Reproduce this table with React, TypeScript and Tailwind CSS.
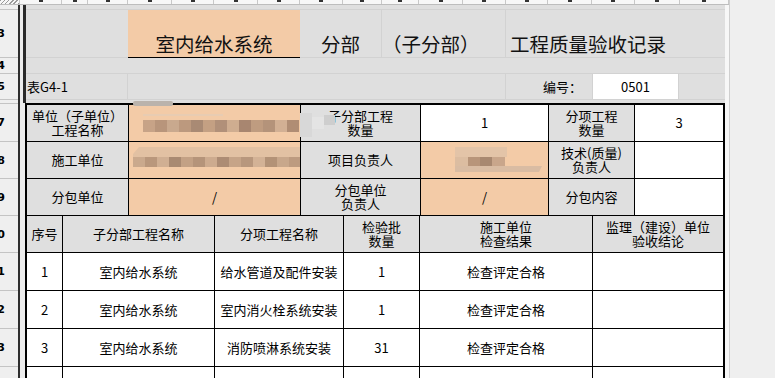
const topCols = [
  "w-[42px]", "w-[26px]", "w-[40px]", "w-[44px]", "w-[42px]", "w-[44px]", "w-[42px]", "w-[43px]", "w-[39px]",
  "w-[37px]", "w-[44px]", "w-[43px]", "w-[42px]", "w-[44px]", "w-[43px]", "w-[45px]", "w-[49px]",
];

const rowHeads = [
  { h: "h-[5px]", l: "" },
  { h: "h-[48px]", l: "3" },
  { h: "h-[16px]", l: "4" },
  { h: "h-[26px]", l: "5" },
  { h: "h-[4px]", l: "" },
  { h: "h-[38px]", l: "7" },
  { h: "h-[37px]", l: "8" },
  { h: "h-[37px]", l: "9" },
  { h: "h-[37px]", l: "10" },
  { h: "h-[38px]", l: "11" },
  { h: "h-[38px]", l: "12" },
  { h: "h-[38px]", l: "13" },
  { h: "h-[38px]", l: "14" },
];

const rows = [
  { no: "1", sub: "室内给水系统", item: "给水管道及配件安装", qty: "1", result: "检查评定合格" },
  { no: "2", sub: "室内给水系统", item: "室内消火栓系统安装", qty: "1", result: "检查评定合格" },
  { no: "3", sub: "室内给水系统", item: "消防喷淋系统安装", qty: "31", result: "检查评定合格" },
  { no: "", sub: "", item: "", qty: "", result: "" },
];

const mos1 = ["#c7a387", "#b8957b", "#c9a98e", "#bc997e", "#a98a74", "#c4a083", "#b19079", "#cfad90", "#a88670", "#bf9c80", "#b4937a", "#d2b094", "#b08d74"];
const mos2 = ["#caa98d", "#b9977c", "#d0af93", "#a98a72", "#c3a185", "#b5947a", "#cdab8f", "#ad8c74", "#c6a488", "#b8977d", "#d3b296", "#b39277", "#c8a78b", "#bd9b80"];

// pixelated (blurred) fields drawn over the cells
function Blur1() {
  return (
    <svg className="absolute left-0 top-[-4px] h-[36px] w-[210px] overflow-visible" viewBox="0 0 210 36">
      <rect x="4" y="0" width="40" height="5" rx="2" fill="#bab3ac" />
      <rect x="14" y="13" width="80" height="2" fill="#e8ccb2" />
      {mos1.map((c, i) => (
        <rect key={i} x={14 + i * 12} y="19" width="12" height="12" fill={c} />
      ))}
      <rect x="171" y="12" width="12" height="24" fill="#d8d8d8" />
      <rect x="183" y="16" width="12" height="12" fill="#e4e4e4" />
      <rect x="195" y="14" width="11" height="10" fill="#cecece" />
    </svg>
  );
}

function Blur2() {
  return (
    <svg className="absolute left-0 top-0 h-[30px] w-[171px]" viewBox="0 0 171 30">
      <polygon points="4,12 10,5 171,5 171,15 4,15" fill="#e2c1a3" />
      {mos2.map((c, i) => (
        <rect key={i} x={4 + i * 12} y="15" width="12" height="10" fill={c} />
      ))}
    </svg>
  );
}

function Blur3() {
  return (
    <svg className="absolute left-0 top-0 h-[32px] w-[126px]" viewBox="0 0 126 32">
      <rect x="34" y="5" width="52" height="10" fill="#e3c4a8" />
      <rect x="34" y="15" width="13" height="10" fill="#dcbda1" />
      <rect x="47" y="15" width="12" height="10" fill="#b8957a" />
      <rect x="59" y="15" width="12" height="10" fill="#a88870" />
      <rect x="71" y="15" width="13" height="10" fill="#c9a68b" />
      <polygon points="34,24 121,24 118,30 34,30" fill="#d9bca3" />
    </svg>
  );
}

export default function App() {
  return (
    <div className="flex h-[378px] w-[775px] overflow-hidden bg-[#efefef] font-['Noto_Sans_CJK_SC',sans-serif] text-[13px] text-black">
      <div className="flex w-[729px] shrink-0 flex-col">
        {/* column header strip */}
        <div className="flex h-[5px] shrink-0 border-b border-[#bdbdbd] bg-[#f7f7f7]">
          <div className="w-[20px] border-r border-[#c8c8c8] bg-[repeating-linear-gradient(135deg,#9a9a9a_0px,#9a9a9a_1px,transparent_1px,transparent_3px)]" />
          {topCols.map((w, i) => (
            <div key={i} className={`${w} flex justify-center border-r border-[#c8c8c8]`}>
              <div className="h-[2px] w-[4px] bg-[#333]" />
            </div>
          ))}
        </div>

        <div className="flex min-h-0 flex-1">
          {/* row headers */}
          <div className="w-[18px] shrink-0 bg-[#efefef]">
            {rowHeads.map((r, i) => (
              <div key={i} className={`${r.h} flex items-center border-b border-[#c4c4c4]`}>
                <div className="flex w-[5px] justify-end overflow-hidden">
                  <span className="whitespace-nowrap font-['DejaVu_Sans',sans-serif] text-[11px] font-bold leading-none">{r.l}</span>
                </div>
              </div>
            ))}
          </div>
          <div className="w-[2px] shrink-0 bg-[#2e2e2e]" />
          <div className="w-[3px] shrink-0 bg-[#ececec]" />

          <div className="w-[702px] shrink-0 bg-[#ececec]">
            {/* title area */}
            <div className="flex h-[98px] flex-col border-l-[3px] border-[#2a2a2a] bg-[#dfdfdf]">
              <div className="h-[5px] border-b border-[#d2d2d2]" />
              <div className="flex h-[48px] text-[19.5px] leading-[20px] text-[#111]">
                <div className="w-[102px] border-b border-[#d2d2d2]" />
                <div className="flex w-[172px] items-end justify-center border-b border-black bg-[#f3cba7] pb-[3px]">室内给水系统</div>
                <div className="flex w-[82px] items-end justify-center border-b border-r border-[#d2d2d2] pb-[3px]">分部</div>
                <div className="flex w-[124px] items-end border-b border-r border-[#d2d2d2] pb-[3px]">（子分部）</div>
                <div className="flex flex-1 items-end border-b border-[#d2d2d2] pb-[3px] pl-[4px]">工程质量验收记录</div>
              </div>
              <div className="h-[16px] border-b border-[#d2d2d2]" />
              <div className="flex h-[26px] leading-[14px]">
                <div className="flex w-[102px] items-center border-b border-r border-[#d2d2d2] pl-[1px]">表G4-1</div>
                <div className="w-[378px] border-b border-r border-[#d2d2d2]" />
                <div className="flex w-[86px] items-center justify-end border-b border-[#d2d2d2] pr-[10px]">编号：</div>
                <div className="flex w-[87px] items-center justify-center border border-t-0 border-[#d2d2d2] bg-white">0501</div>
                <div className="flex-1 border-b border-[#d2d2d2]" />
              </div>
            </div>

            {/* record table */}
            <div className="ml-[2px] flex w-[700px] flex-col gap-px border-2 border-black bg-black leading-[14px]">
              <div className="grid grid-cols-[101px_171px_119px_127px_85px_88px] grid-rows-[36px_36px_36px] gap-px">
                <div className="flex flex-col items-center justify-center bg-[#dfdfdf]">
                  <span>单位（子单位）</span>
                  <span>工程名称</span>
                </div>
                <div className="relative bg-[#f3cba7]">
                  <Blur1 />
                </div>
                <div className="flex flex-col items-center justify-center bg-[#dfdfdf]">
                  <span>子分部工程</span>
                  <span>数量</span>
                </div>
                <div className="flex items-center justify-center bg-white">1</div>
                <div className="flex flex-col items-center justify-center bg-[#dfdfdf]">
                  <span>分项工程</span>
                  <span>数量</span>
                </div>
                <div className="flex items-center justify-center bg-white">3</div>

                <div className="flex items-center justify-center bg-[#dfdfdf]">施工单位</div>
                <div className="relative bg-[#f3cba7]">
                  <Blur2 />
                </div>
                <div className="flex items-center justify-center bg-[#dfdfdf]">项目负责人</div>
                <div className="relative bg-[#f3cba7]">
                  <Blur3 />
                </div>
                <div className="flex flex-col items-center justify-center bg-[#dfdfdf]">
                  <span>技术(质量)</span>
                  <span>负责人</span>
                </div>
                <div className="bg-white" />

                <div className="flex items-center justify-center bg-[#dfdfdf]">分包单位</div>
                <div className="flex items-center justify-center bg-[#f3cba7]">/</div>
                <div className="flex flex-col items-center justify-center bg-[#dfdfdf]">
                  <span>分包单位</span>
                  <span>负责人</span>
                </div>
                <div className="flex items-center justify-center bg-[#f3cba7]">/</div>
                <div className="flex items-center justify-center bg-[#dfdfdf]">分包内容</div>
                <div className="bg-white" />
              </div>

              <div className="grid grid-cols-[35px_151px_128px_75px_172px_130px] grid-rows-[36px_37px_37px_37px_37px] gap-px">
                <div className="flex items-center justify-center bg-[#dfdfdf]">序号</div>
                <div className="flex items-center justify-center bg-[#dfdfdf]">子分部工程名称</div>
                <div className="flex items-center justify-center bg-[#dfdfdf]">分项工程名称</div>
                <div className="flex flex-col items-center justify-center bg-[#dfdfdf]">
                  <span>检验批</span>
                  <span>数量</span>
                </div>
                <div className="flex flex-col items-center justify-center bg-[#dfdfdf]">
                  <span>施工单位</span>
                  <span>检查结果</span>
                </div>
                <div className="flex flex-col items-center justify-center bg-[#dfdfdf]">
                  <span>监理（建设）单位</span>
                  <span>验收结论</span>
                </div>

                {rows.map((r, i) => [
                  <div key={`a${i}`} className="flex items-center justify-center bg-white">{r.no}</div>,
                  <div key={`b${i}`} className="flex items-center justify-center bg-white">{r.sub}</div>,
                  <div key={`c${i}`} className="flex items-center justify-center bg-white">{r.item}</div>,
                  <div key={`d${i}`} className="flex items-center justify-center bg-white">{r.qty}</div>,
                  <div key={`e${i}`} className="flex items-center justify-center bg-white">{r.result}</div>,
                  <div key={`f${i}`} className="bg-white" />,
                ])}
              </div>
            </div>
          </div>

          <div className="w-[4px] shrink-0 bg-[#f7f7f7]" />
        </div>
      </div>
      <div className="w-[46px] shrink-0 border-l border-[#cfcfcf] bg-[#efefef]" />
    </div>
  );
}
